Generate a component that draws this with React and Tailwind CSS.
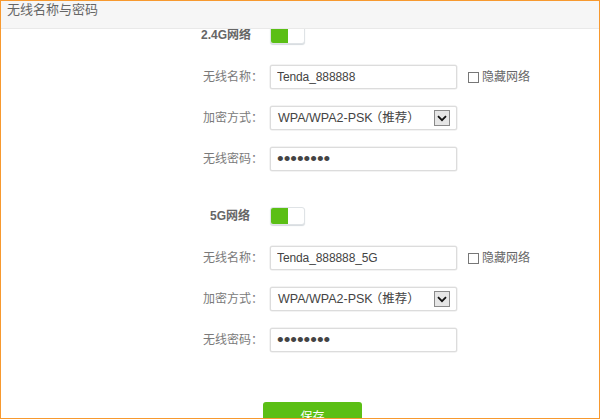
const FONT = "font-['Liberation_Sans','Noto_Sans_CJK_SC',sans-serif]";

function Row({ label, children, className = "" }) {
  return (
    <div className={`flex items-center ${className}`}>
      <label className="w-[69px] shrink-0 pl-[2px] text-[12px] text-[#7a7a7a]">{label}</label>
      {children}
    </div>
  );
}

function TextField({ value, type = "text" }) {
  const size = type === "password" ? "text-[19px]" : "text-[12px] tracking-[-0.1px]";
  return (
    <input
      readOnly
      type={type}
      value={value}
      className={`h-[24px] w-[187px] rounded-[2px] border border-[#dcdcdc] bg-white px-[6px] ${size} text-[#444] shadow-[0_0_0_0.5px_#e8e8e8] outline-none`}
    />
  );
}

function SelectField() {
  return (
    <div className="flex h-[24px] w-[187px] items-center justify-between rounded-[2px] border border-[#dcdcdc] bg-white pl-[7px] pr-[6px] text-[12.5px] text-[#444] shadow-[0_0_0_0.5px_#e8e8e8]">
      <span>
        WPA/WPA2-PSK<span className="-ml-[3px]">（推荐）</span>
      </span>
      <span className="flex h-[16px] w-[16px] items-center justify-center border border-[#8a8a8a] bg-[#e6e6e6]">
        <svg width="10" height="7" viewBox="0 0 10 7" fill="none">
          <path d="M1 1.2 5 5.2 9 1.2" stroke="#111" strokeWidth="1.8" />
        </svg>
      </span>
    </div>
  );
}

function Toggle() {
  return (
    <div className="flex h-[18px] w-[35px] overflow-hidden rounded-[3px] border border-[#dfe3e6] bg-white shadow-[0_1px_1px_#d5dade]">
      <div className="h-full w-[17px] bg-[#5bbf15]" />
    </div>
  );
}

function Band({ name, ssid, className = "" }) {
  return (
    <section className={`flex flex-col ${className}`}>
      <div className="flex items-center">
        <div className="w-[69px] shrink-0 whitespace-nowrap pr-[20px] text-right text-[12px] font-bold leading-[18px] text-[#666]">{name}</div>
        <Toggle />
      </div>
      <Row className="mt-[21px]" label="无线名称：">
        <TextField value={ssid} />
        <span className="ml-[11px] flex items-center gap-[3px] text-[12px] text-[#666]">
          <span className="h-[11px] w-[11px] border border-[#777] bg-white" />
          隐藏网络
        </span>
      </Row>
      <Row className="mt-[17px]" label="加密方式：">
        <SelectField />
      </Row>
      <Row className="mt-[17px]" label="无线密码：">
        <TextField type="password" value="88888888" />
      </Row>
    </section>
  );
}

export default function App() {
  return (
    <div className={`flex h-[419px] w-[600px] flex-col overflow-hidden border border-[#f7992f] bg-white ${FONT}`}>
      <header className="relative z-10 h-[28px] shrink-0 border-b border-[#e9e9e9] bg-[#f6f6f6] pl-[6px] text-[13px] leading-[18px] text-[#666]">
        无线名称与密码
      </header>
      <main className="min-h-0 flex-1 overflow-hidden">
        <div className="-mt-[3px] ml-[200px]">
          <Band name="2.4G网络" ssid="Tenda_888888" />
          <Band className="mt-[36px]" name="5G网络" ssid="Tenda_888888_5G" />
          <button className="ml-[62px] mt-[50px] block h-[26px] w-[99px] rounded-[3px] bg-[#5bbf15] pt-[3px] text-[12px] text-white">保存</button>
        </div>
      </main>
    </div>
  );
}
